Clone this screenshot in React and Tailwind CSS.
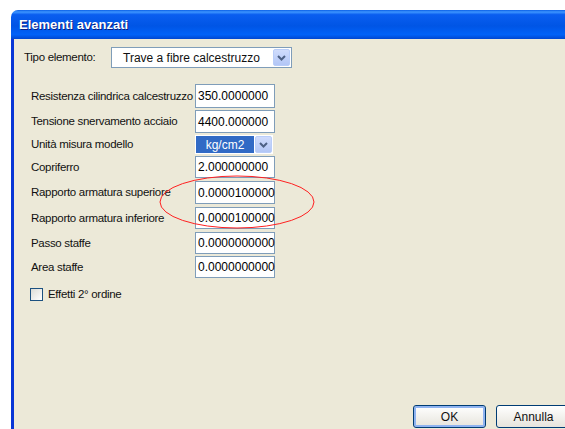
import React from 'react';

const rows = [
  { label: 'Resistenza cilindrica calcestruzzo', value: '350.0000000', h: 'h-[24px]', mt: 'mt-0' },
  { label: 'Tensione snervamento acciaio', value: '4400.000000', h: 'h-[23px]', mt: 'mt-[2px]' },
  { label: 'Unità misura modello', select: 'kg/cm2', h: 'h-[19px]', mt: 'mt-[2px]' },
  { label: 'Copriferro', value: '2.000000000', h: 'h-[22px]', mt: 'mt-[2px]' },
  { label: 'Rapporto armatura superiore', value: '0.0000100000', h: 'h-[23px]', mt: 'mt-[3px]' },
  { label: 'Rapporto armatura inferiore', value: '0.0000100000', h: 'h-[22px]', mt: 'mt-[3px]' },
  { label: 'Passo staffe', value: '0.0000000000', h: 'h-[22px]', mt: 'mt-[3px]' },
  { label: 'Area staffe', value: '0.0000000000', h: 'h-[22px]', mt: 'mt-[2px]' },
];

function DropButton() {
  return (
    <div className="w-[17px] h-full flex items-center justify-center rounded-[2px] border border-[#b9cdf9] bg-gradient-to-b from-[#d0dcfc] to-[#b2c6f6]">
      <svg width="9" height="6" viewBox="0 0 9 6">
        <path d="M1 1 L4.5 4.5 L8 1" fill="none" stroke="#4d6185" strokeWidth="2" />
      </svg>
    </div>
  );
}

function Field({ value }) {
  return (
    <div className="w-[80px] h-full flex items-center border border-[#7f9db9] bg-white px-[2px] text-[12px] text-black">
      {value}
    </div>
  );
}

function UnitSelect({ value }) {
  return (
    <div className="w-[78px] h-full flex items-stretch gap-[1px] bg-white p-[1px]">
      <div className="flex-1 flex items-center justify-center bg-[#316ac5] text-white text-[12px]">{value}</div>
      <DropButton />
    </div>
  );
}

export default function App() {
  return (
    <div
      className="relative w-[565px] h-[429px] overflow-hidden bg-white pt-[10px] pl-[11px]"
      style={{ fontFamily: '"Liberation Sans", Arial, sans-serif' }}
    >
      <div className="w-[554px] h-[440px] flex flex-col">
        {/* title bar */}
        <div className="h-[29px] flex items-center pl-[8px] rounded-tl-[7px] bg-[linear-gradient(to_bottom,#0a5fe6_0%,#3d95ff_7%,#0a5ef0_16%,#0055e5_55%,#0062f8_85%,#0046d0_100%)]">
          <span className="text-white font-bold text-[13px] [text-shadow:1px_1px_0_#0a1e80]">Elementi avanzati</span>
        </div>

        {/* dialog body */}
        <div className="flex-1 flex flex-col border-l-[3px] border-[#0836d6] bg-[#ece9d8] pt-[8px] text-[11.5px] tracking-[-0.3px] text-[#111]">
          <div className="flex items-center h-[21px]">
            <span className="pl-[10px] w-[97px]">Tipo elemento:</span>
            <div className="w-[181px] h-full flex items-stretch border border-[#7f9db9] bg-white p-[1px]">
              <span className="flex-1 flex items-center pl-[10px] text-[12px] tracking-normal">Trave a fibre calcestruzzo</span>
              <DropButton />
            </div>
          </div>

          <div className="flex flex-col pl-[17px] mt-[16px]">
            {rows.map((r) => (
              <div key={r.label} className={`flex items-center ${r.h} ${r.mt}`}>
                <span className="w-[164px] whitespace-nowrap pt-[1px]">{r.label}</span>
                <div className="h-full tracking-normal">
                  {r.select ? <UnitSelect value={r.select} /> : <Field value={r.value} />}
                </div>
              </div>
            ))}

            <label className="flex items-center gap-[5px] mt-[8px] -ml-[1px]">
              <span className="w-[13px] h-[13px] border border-[#1c5180] bg-gradient-to-br from-[#dcdcd7] to-white" />
              <span>Effetti 2° ordine</span>
            </label>
          </div>

          <div className="flex-1" />
          <div className="flex gap-[10px] pl-[399px] pb-[22px]">
            <button className="shrink-0 w-[73px] h-[23px] rounded-[3px] border border-[#003c74] bg-gradient-to-b from-white to-[#e6e4dc] shadow-[inset_0_0_0_2px_#8fb3f0] text-[12px] tracking-normal">
              OK
            </button>
            <button className="shrink-0 w-[75px] h-[23px] rounded-[3px] border border-[#003c74] bg-gradient-to-b from-white to-[#e6e4dc] text-[12px] tracking-normal">
              Annulla
            </button>
          </div>
        </div>
      </div>

      {/* red ring marking the two reinforcement ratios */}
      <svg className="absolute left-0 top-0 pointer-events-none" width="565" height="429">
        <ellipse cx="237" cy="202" rx="77" ry="26" fill="none" stroke="#ff2020" strokeWidth="1" />
      </svg>
    </div>
  );
}
